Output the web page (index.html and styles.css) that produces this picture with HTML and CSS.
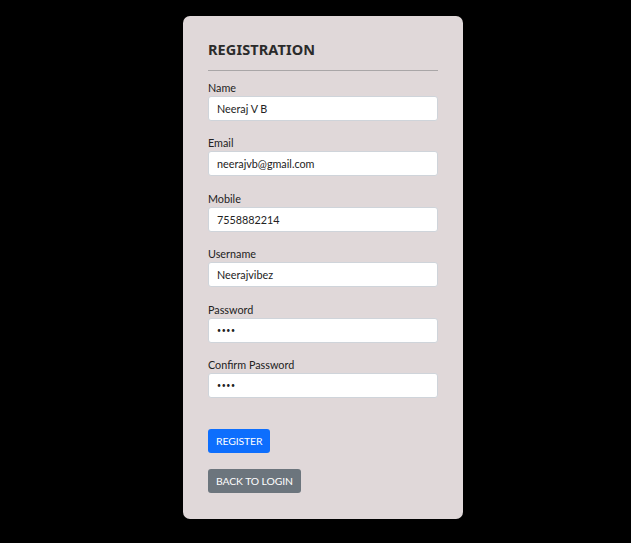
FILE: index.html
```html
<!DOCTYPE html>
<html>
<head>
<meta charset="utf-8">
<link rel="stylesheet" href="styles.css">
</head>
<body>
<div class="card">
  <h1 class="title">REGISTRATION</h1>
  <hr class="rule">
  <div class="field"><label class="label">Name</label><div class="input">Neeraj V B</div></div>
  <div class="field"><label class="label">Email</label><div class="input">neerajvb@gmail.com</div></div>
  <div class="field"><label class="label">Mobile</label><div class="input">7558882214</div></div>
  <div class="field"><label class="label">Username</label><div class="input">Neerajvibez</div></div>
  <div class="field"><label class="label">Password</label><div class="input dots">••••</div></div>
  <div class="field"><label class="label">Confirm Password</label><div class="input dots">••••</div></div>
  <div class="actions">
    <button class="btn btn-primary">REGISTER</button>
    <button class="btn btn-secondary">BACK TO LOGIN</button>
  </div>
</div>
</body>
</html>
```
FILE: styles.css
```css
html, body { margin: 0; padding: 0; background: #000; }
body {
  font-family: "Lato", "Noto Sans", sans-serif;
  padding: 16px 0 24px 183px;
}
.card {
  width: 230px;
  background: #e0d8d9;
  border-radius: 7px;
  padding: 24px 25px 26px;
  color: #222;
}
.title {
  margin: 0;
  font-family: "Noto Sans", sans-serif;
  font-size: 14.5px;
  line-height: 18px;
  font-weight: 700;
  color: #2b2b2b;
  letter-spacing: 0.1px;
}
.rule {
  margin: 12px 0 0;
  border: 0;
  border-top: 1px solid #a9a6a7;
  height: 0;
}
.field { display: flex; flex-direction: column; margin-top: 14.5px; }
.field:first-of-type { margin-top: 8.5px; }
.label {
  font-size: 10.8px;
  line-height: 16px;
  color: #222;
}
.input {
  box-sizing: border-box;
  height: 25px;
  background: #fff;
  border: 1px solid #cfd4da;
  border-radius: 3px;
  padding: 0 8px;
  font-size: 10.8px;
  line-height: 23px;
  color: #222;
}
.dots { font-size: 7px; letter-spacing: 0.6px; }
.actions {
  margin-top: 31px;
  display: flex;
  flex-direction: column;
  align-items: flex-start;
  gap: 16px;
}
.btn {
  font-family: inherit;
  height: 24px;
  border: 0;
  border-radius: 3px;
  padding: 0 8px;
  font-size: 10.4px;
  letter-spacing: -0.1px;
  color: #fff;
}
.btn-primary { background: #0d6efd; }
.btn-secondary { background: #6c757d; }
```
